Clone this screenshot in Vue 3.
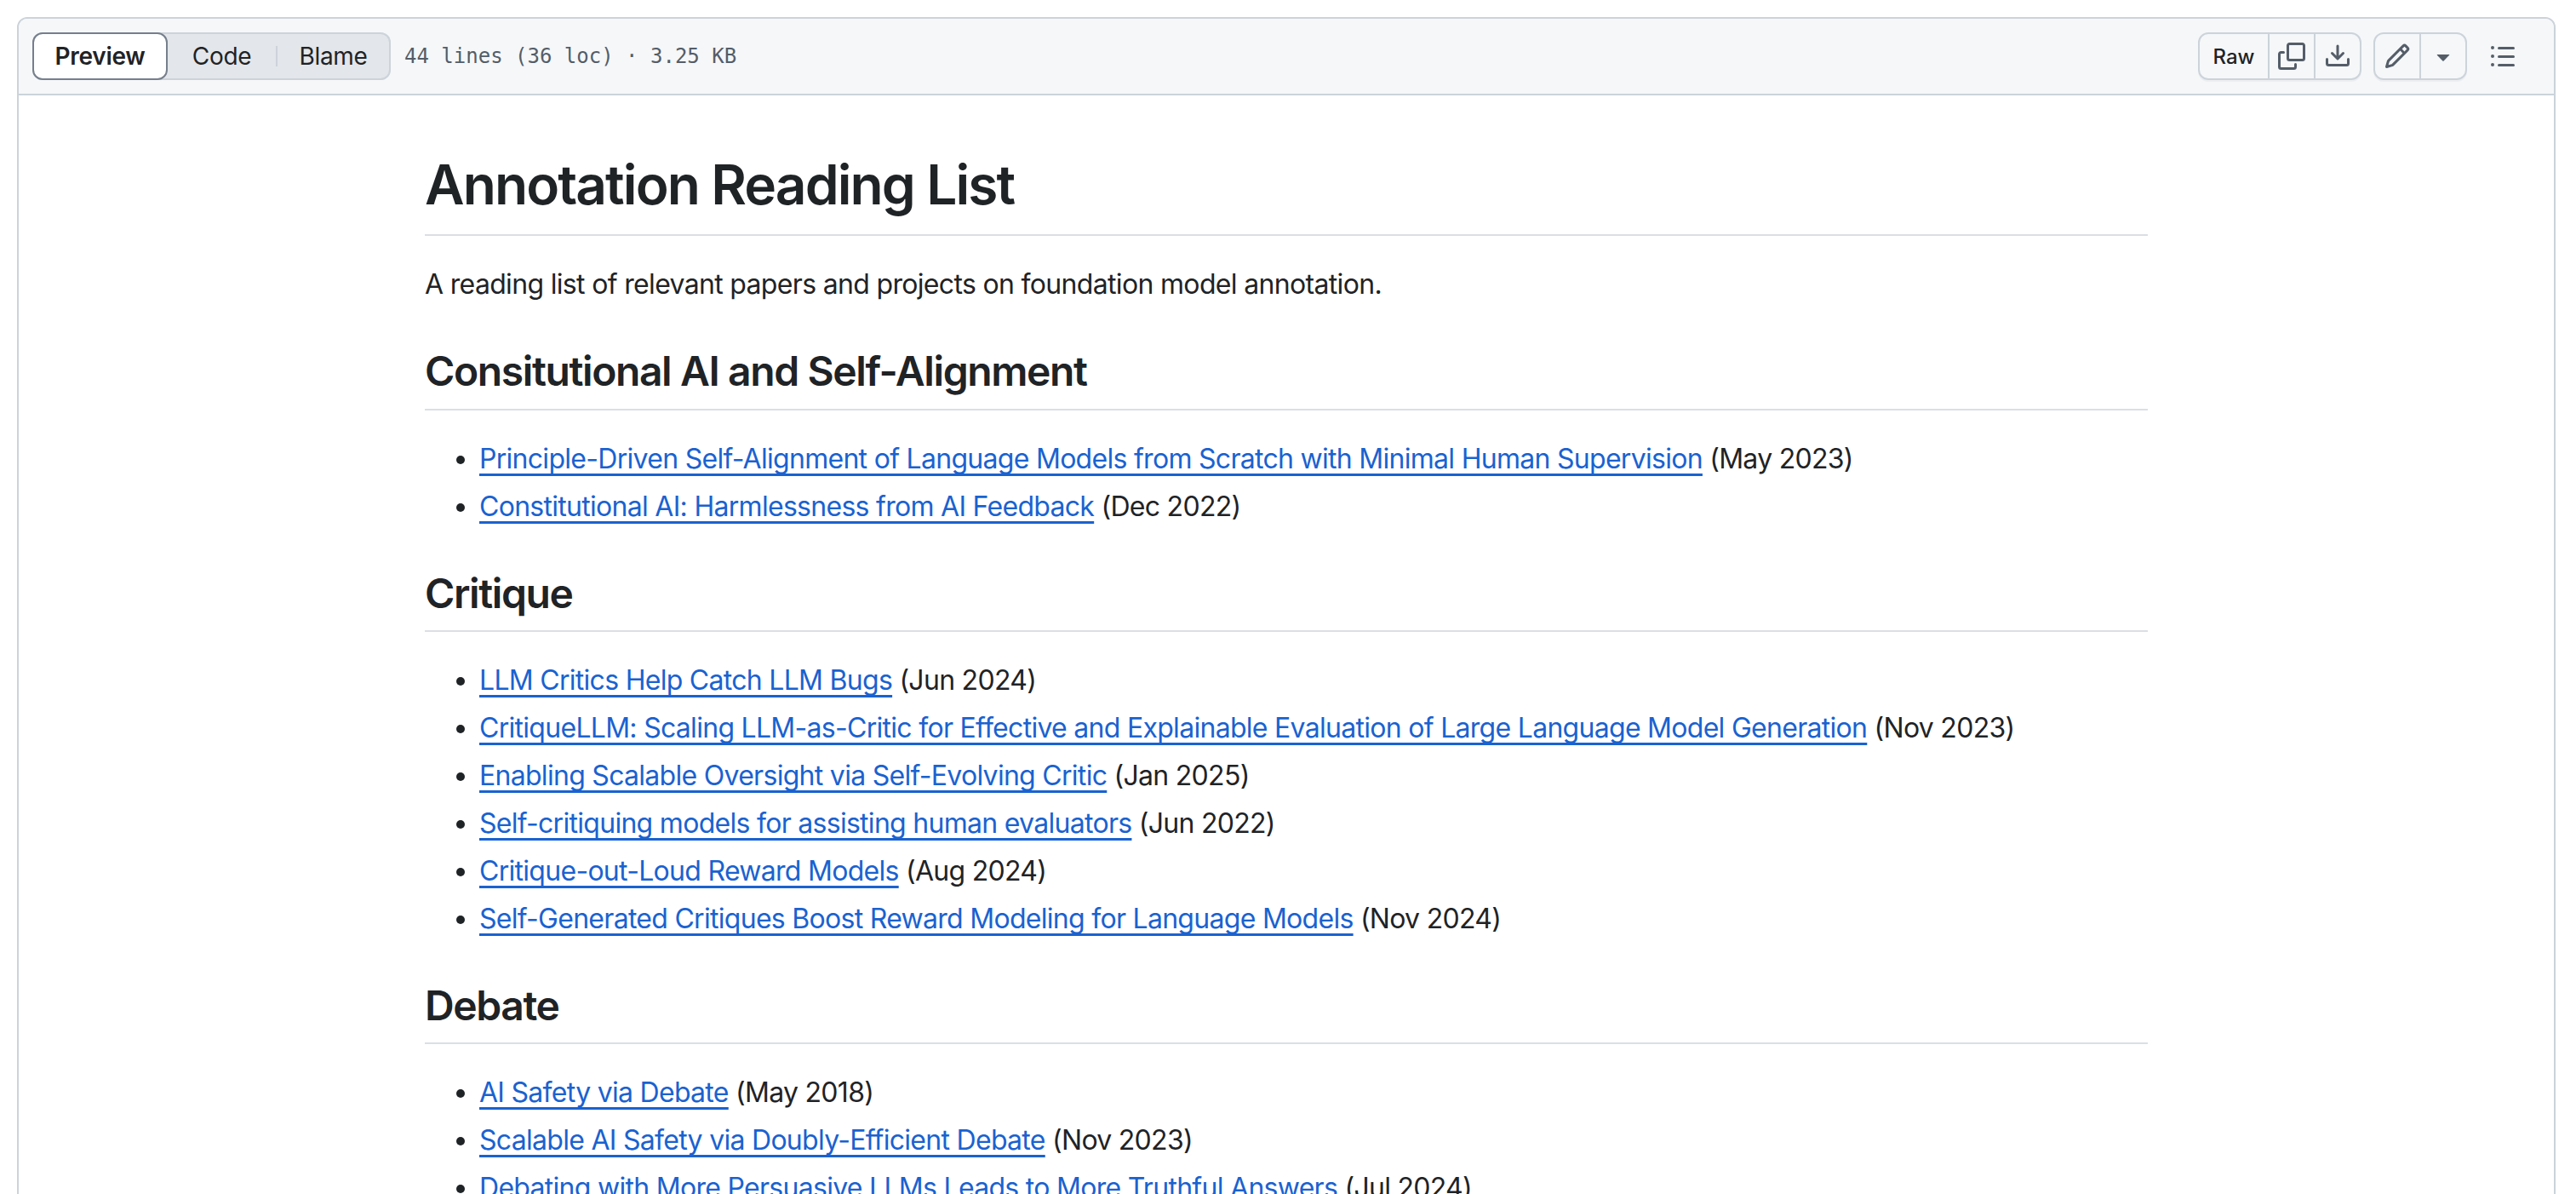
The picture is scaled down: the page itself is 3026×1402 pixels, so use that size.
<template>
    <div class="file-view">
        <section class="file-box">
            <header class="file-header">
                <div class="file-header__left">
                    <div class="segmented">
                        <button class="segment segment--active">Preview</button>
                        <button class="segment segment--code">Code</button>
                        <span class="segment-divider"></span>
                        <button class="segment segment--blame">Blame</button>
                    </div>
                    <span class="file-info">44 lines (36 loc) · 3.25 KB</span>
                </div>
                <div class="file-header__right">
                    <div class="btn-group">
                        <button class="btn btn--raw">Raw</button>
                        <button class="btn">
                            <svg class="icon" viewBox="0 0 16 16"><path :d="icons.copy" /></svg>
                        </button>
                        <button class="btn">
                            <svg class="icon" viewBox="0 0 16 16"><path :d="icons.download" /></svg>
                        </button>
                    </div>
                    <div class="btn-group">
                        <button class="btn">
                            <svg class="icon" viewBox="0 0 16 16"><path :d="icons.pencil" /></svg>
                        </button>
                        <button class="btn">
                            <svg class="icon" viewBox="0 0 16 16"><path :d="icons.caret" /></svg>
                        </button>
                    </div>
                    <button class="btn btn--outline">
                        <svg class="icon" viewBox="0 0 16 16"><path :d="icons.list" /></svg>
                    </button>
                </div>
            </header>

            <!-- rendered markdown -->
            <article class="markdown-body">
                <h1>Annotation Reading List</h1>
                <p>A reading list of relevant papers and projects on foundation model annotation.</p>
                <template v-for="section in sections" :key="section.title">
                    <h2>{{ section.title }}</h2>
                    <ul>
                        <li v-for="paper in section.papers" :key="paper.title">
                            <a href="#">{{ paper.title }}</a> ({{ paper.date }})
                        </li>
                    </ul>
                </template>
            </article>
        </section>
    </div>
</template>

<script setup>
const sections = [
    {
        title: 'Consitutional AI and Self-Alignment',
        papers: [
            { title: 'Principle-Driven Self-Alignment of Language Models from Scratch with Minimal Human Supervision', date: 'May 2023' },
            { title: 'Constitutional AI: Harmlessness from AI Feedback', date: 'Dec 2022' },
        ],
    },
    {
        title: 'Critique',
        papers: [
            { title: 'LLM Critics Help Catch LLM Bugs', date: 'Jun 2024' },
            { title: 'CritiqueLLM: Scaling LLM-as-Critic for Effective and Explainable Evaluation of Large Language Model Generation', date: 'Nov 2023' },
            { title: 'Enabling Scalable Oversight via Self-Evolving Critic', date: 'Jan 2025' },
            { title: 'Self-critiquing models for assisting human evaluators', date: 'Jun 2022' },
            { title: 'Critique-out-Loud Reward Models', date: 'Aug 2024' },
            { title: 'Self-Generated Critiques Boost Reward Modeling for Language Models', date: 'Nov 2024' },
        ],
    },
    {
        title: 'Debate',
        papers: [
            { title: 'AI Safety via Debate', date: 'May 2018' },
            { title: 'Scalable AI Safety via Doubly-Efficient Debate', date: 'Nov 2023' },
            { title: 'Debating with More Persuasive LLMs Leads to More Truthful Answers', date: 'Jul 2024' },
        ],
    },
];

const icons = {
    copy: 'M0 6.75C0 5.784.784 5 1.75 5h1.5a.75.75 0 0 1 0 1.5h-1.5a.25.25 0 0 0-.25.25v7.5c0 .138.112.25.25.25h7.5a.25.25 0 0 0 .25-.25v-1.5a.75.75 0 0 1 1.5 0v1.5A1.75 1.75 0 0 1 9.25 16h-7.5A1.75 1.75 0 0 1 0 14.25ZM5 1.75C5 .784 5.784 0 6.75 0h7.5C15.216 0 16 .784 16 1.75v7.5A1.75 1.75 0 0 1 14.25 11h-7.5A1.75 1.75 0 0 1 5 9.25Zm1.75-.25a.25.25 0 0 0-.25.25v7.5c0 .138.112.25.25.25h7.5a.25.25 0 0 0 .25-.25v-7.5a.25.25 0 0 0-.25-.25Z',
    download: 'M2.75 14A1.75 1.75 0 0 1 1 12.25v-2.5a.75.75 0 0 1 1.5 0v2.5c0 .138.112.25.25.25h10.5a.25.25 0 0 0 .25-.25v-2.5a.75.75 0 0 1 1.5 0v2.5A1.75 1.75 0 0 1 13.25 14ZM7.25 7.689V2a.75.75 0 0 1 1.5 0v5.689l1.97-1.969a.749.749 0 1 1 1.06 1.06l-3.25 3.25a.749.749 0 0 1-1.06 0L4.22 6.78a.749.749 0 1 1 1.06-1.06l1.97 1.969Z',
    pencil: 'M11.013 1.427a1.75 1.75 0 0 1 2.474 0l1.086 1.086a1.75 1.75 0 0 1 0 2.474l-8.61 8.61c-.21.21-.47.364-.756.445l-3.251.93a.75.75 0 0 1-.927-.928l.929-3.25c.081-.286.235-.547.445-.758l8.61-8.61Zm.176 4.823L9.75 4.81l-6.286 6.287a.253.253 0 0 0-.064.108l-.558 1.953 1.953-.558a.253.253 0 0 0 .108-.064Zm1.238-3.763a.25.25 0 0 0-.354 0L10.811 3.75l1.439 1.44 1.263-1.263a.25.25 0 0 0 0-.354Z',
    caret: 'm4.427 7.427 3.396 3.396a.25.25 0 0 0 .354 0l3.396-3.396A.25.25 0 0 0 11.396 7H4.604a.25.25 0 0 0-.177.427Z',
    list: 'M5.75 2.5h8.5a.75.75 0 0 1 0 1.5h-8.5a.75.75 0 0 1 0-1.5Zm0 5h8.5a.75.75 0 0 1 0 1.5h-8.5a.75.75 0 0 1 0-1.5Zm0 5h8.5a.75.75 0 0 1 0 1.5h-8.5a.75.75 0 0 1 0-1.5ZM2 14a1 1 0 1 1 0-2 1 1 0 0 1 0 2Zm1-6a1 1 0 1 1-2 0 1 1 0 0 1 2 0ZM2 4a1 1 0 1 1 0-2 1 1 0 0 1 0 2Z',
};
</script>

<style>
body {
    margin: 0;
    background-color: #ffffff;
    overflow: hidden;
}
</style>

<style scoped>
.file-view {
    box-sizing: border-box;
    height: 1402px;
    padding: 20px 24px 0 20px;
    overflow: hidden;
    font-family: Inter, "Liberation Sans", sans-serif;
    color: #1f2326;
}

.file-box {
    border: 2px solid #ccd3da;
    border-radius: 12px;
    background-color: #ffffff;
}

.file-header {
    box-sizing: border-box;
    height: 90px;
    display: flex;
    align-items: center;
    justify-content: space-between;
    padding: 0 32px 0 16px;
    border-bottom: 2px solid #ccd3da;
    border-radius: 10px 10px 0 0;
    background-color: #f5f7f9;
}

.file-header__left {
    display: flex;
    align-items: center;
    gap: 16px;
}

.file-header__right {
    display: flex;
    align-items: center;
    gap: 14px;
}

button {
    box-sizing: border-box;
    margin: 0;
    padding: 0;
    border: 0;
    background: none;
    font-family: inherit;
    color: inherit;
}

.segmented {
    box-sizing: border-box;
    width: 421px;
    height: 56px;
    display: flex;
    align-items: center;
    border-radius: 12px;
    background-color: #e3e6ea;
    box-shadow: inset 0 0 0 2px #ccd3da;
}

.segment {
    height: 56px;
    font-size: 28px;
    letter-spacing: -0.3px;
}

.segment--active {
    width: 159px;
    border: 2px solid #767f8c;
    border-radius: 12px;
    background-color: #ffffff;
    font-weight: 600;
}

.segment--code {
    width: 127px;
}

.segment--blame {
    width: 133px;
    padding-right: 2px;
}

.segment-divider {
    width: 2px;
    height: 24px;
    background-color: #ccd3da;
}

.file-info {
    font-family: "DejaVu Sans Mono", monospace;
    font-size: 24px;
    line-height: 36px;
    color: #545d68;
}

.btn-group {
    display: flex;
    border: 2px solid #ccd3da;
    border-radius: 12px;
    box-shadow: 0 2px 0 rgba(31, 35, 40, 0.04);
}

.btn {
    width: 52px;
    height: 52px;
    display: flex;
    align-items: center;
    justify-content: center;
    color: #545d68;
}

.btn + .btn {
    width: 54px;
    border-left: 2px solid #ccd3da;
}

.btn--raw {
    width: 80px;
    font-size: 24px;
    font-weight: 500;
    color: #1f2326;
}

.btn--outline {
    width: 56px;
}

.icon {
    width: 32px;
    height: 32px;
    display: block;
    fill: currentColor;
}

.markdown-body {
    width: 2024px;
    margin: 0 auto;
    padding: 64px 0;
    font-size: 32px;
    line-height: 48px;
    letter-spacing: -0.71px;
}

.markdown-body h1,
.markdown-body h2 {
    font-weight: 600;
    line-height: 1.25;
    padding-top: 1px;
    padding-bottom: calc(0.3em - 1px);
    border-bottom: 2px solid #dadfe4;
}

.markdown-body h1 {
    margin: 0 0 33px;
    font-size: 64px;
    letter-spacing: -1.9px;
}

.markdown-body h2 {
    margin: 47px 0 33px;
    font-size: 48px;
    letter-spacing: -1.4px;
}

.markdown-body p {
    margin: 0;
    letter-spacing: -0.67px;
}

.markdown-body ul {
    margin: 0;
    padding-left: 64px;
}

.markdown-body li + li {
    margin-top: 8px;
}

.markdown-body a {
    color: #1a62d0;
    text-decoration: underline;
    text-decoration-thickness: 3px;
    text-decoration-skip-ink: none;
    text-underline-offset: 6.4px;
}
</style>
